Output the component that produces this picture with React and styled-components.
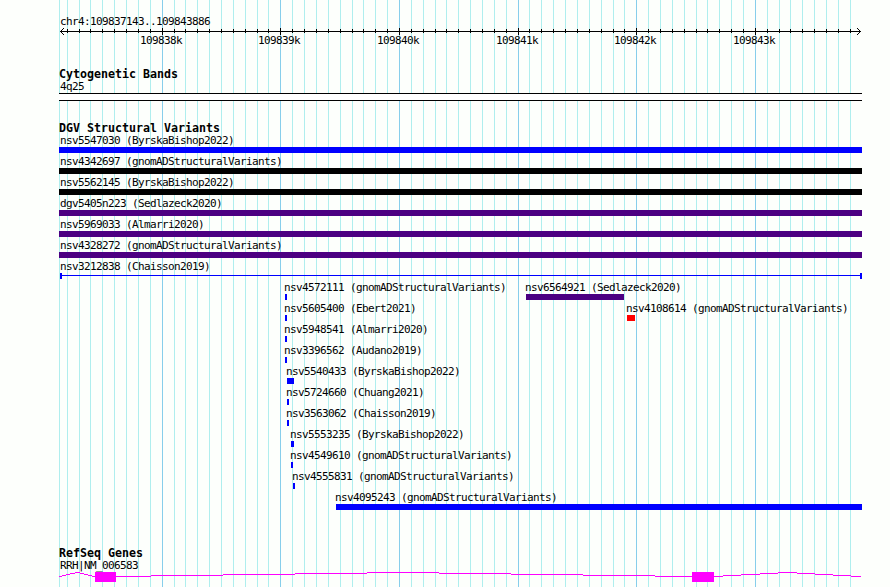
import React from "react";
import styled, { createGlobalStyle } from "styled-components";

const PAD = 59;
const SCALE = 800 / 6743;
const START = 109837143;

const toX = (pos) => Math.round(60 + (pos - START) * SCALE);

const gridLines = Array.from({ length: 67 }, (_, i) => {
  const pos = 109837200 + i * 100;
  return { pos, x: toX(pos), major: pos % 1000 === 0 };
});

const GlobalStyle = createGlobalStyle`
  html, body { margin: 0; overflow: hidden; background: #fdfffc; }
`;

const Browser = styled.main`
  position: relative;
  width: 890px;
  height: 587px;
  overflow: hidden;
  box-sizing: border-box;
  color: #000;
  background: #fdfffc;
`;

const Backdrop = styled.svg`
  position: absolute;
  inset: 0;
  shape-rendering: crispEdges;
`;

const Tracks = styled.div`
  position: relative;
  width: 803px;
  height: 100%;
  margin-left: ${PAD}px;
  display: flex;
  flex-direction: column;
`;

const Label = styled.span`
  display: block;
  height: 13px;
  margin-left: ${({ $inset = 1 }) => $inset}px;
  font: 11px/13px "DejaVu Sans Mono", monospace;
  letter-spacing: -0.622px;
  white-space: pre;
`;

const Title = styled.h2`
  margin: 0;
  height: 13px;
  padding-top: 1px;
  box-sizing: border-box;
  font: bold 11.63px/13px "DejaVu Sans Mono", monospace;
  letter-spacing: 0;
  white-space: pre;
`;

const RulerTrack = styled.header`
  height: 67px;
  padding-top: 15px;
  box-sizing: border-box;
`;

const Axis = styled.svg`
  display: block;
  width: 803px;
  height: 7px;
  overflow: visible;
  shape-rendering: crispEdges;
`;

const AxisLabels = styled.div`
  display: grid;
  grid-template-columns: ${({ $columns }) => $columns};
  padding-left: 81px;
  margin-top: -1px;
`;

const BandTrack = styled.section`
  height: 54px;
`;

const Band = styled.div`
  height: 6px;
  border: solid #000;
  border-width: 1px 0;
  background: #fff;
`;

const VariantTrack = styled.section`
  height: 425px;
`;

const Row = styled.div`
  display: flex;
  height: 21px;
`;

const Feature = styled.div`
  flex: none;
  width: ${({ $width }) => $width}px;
  margin-left: ${({ $gap }) => $gap}px;
  overflow: visible;
`;

const Bar = styled.div`
  width: ${({ $width }) => $width}px;
  height: 6px;
  background: ${({ $color }) => $color};
`;

const Span = styled.div`
  height: 6px;
  margin-left: 1px;
  box-sizing: border-box;
  border: solid #00f;
  border-width: 0 2px;
  display: flex;
  align-items: center;
  &::before {
    content: "";
    flex: 1;
    height: 1px;
    margin-bottom: 1px;
    background: #00f;
  }
`;

const GeneTrack = styled.section`
  height: 40px;
`;

const GeneModel = styled.svg`
  display: block;
  width: 803px;
  height: 10px;
  overflow: visible;
  shape-rendering: crispEdges;
`;

const BLUE = "#0000ff";
const INDIGO = "#4b0082";

const rows = [
  [{ name: "nsv5547030 (ByrskaBishop2022)", x: 59, w: 803, color: BLUE }],
  [{ name: "nsv4342697 (gnomADStructuralVariants)", x: 59, w: 803, color: "#000" }],
  [{ name: "nsv5562145 (ByrskaBishop2022)", x: 59, w: 803, color: "#000" }],
  [{ name: "dgv5405n223 (Sedlazeck2020)", x: 59, w: 803, color: INDIGO }],
  [{ name: "nsv5969033 (Almarri2020)", x: 59, w: 803, color: INDIGO }],
  [{ name: "nsv4328272 (gnomADStructuralVariants)", x: 59, w: 803, color: INDIGO }],
  [{ name: "nsv3212838 (Chaisson2019)", x: 59, w: 803, span: true }],
  [
    { name: "nsv4572111 (gnomADStructuralVariants)", x: 285, w: 2, color: BLUE },
    { name: "nsv6564921 (Sedlazeck2020)", x: 526, w: 98, color: INDIGO },
  ],
  [
    { name: "nsv5605400 (Ebert2021)", x: 285, w: 2, color: BLUE },
    { name: "nsv4108614 (gnomADStructuralVariants)", x: 627, w: 8, color: "#f00" },
  ],
  [{ name: "nsv5948541 (Almarri2020)", x: 285, w: 2, color: BLUE }],
  [{ name: "nsv3396562 (Audano2019)", x: 285, w: 2, color: BLUE }],
  [{ name: "nsv5540433 (ByrskaBishop2022)", x: 287, w: 7, color: BLUE }],
  [{ name: "nsv5724660 (Chuang2021)", x: 287, w: 2, color: BLUE }],
  [{ name: "nsv3563062 (Chaisson2019)", x: 287, w: 2, color: BLUE }],
  [{ name: "nsv5553235 (ByrskaBishop2022)", x: 291, w: 3, color: BLUE }],
  [{ name: "nsv4549610 (gnomADStructuralVariants)", x: 291, w: 2, color: BLUE }],
  [{ name: "nsv4555831 (gnomADStructuralVariants)", x: 293, w: 2, color: BLUE }],
  [{ name: "nsv4095243 (gnomADStructuralVariants)", x: 336, w: 526, color: BLUE }],
];

// [start, end, depth below the intron peak]
const introns = [
  [59, 62, 4], [62, 66, 3], [66, 70, 2], [70, 75, 1], [75, 80, 0],
  [80, 84, 1], [84, 88, 2], [88, 92, 3], [92, 95, 4],
  [116, 151, 4], [151, 223, 3], [223, 295, 2], [295, 367, 1], [367, 439, 0],
  [439, 511, 1], [511, 583, 2], [583, 655, 3], [655, 692, 4],
  [714, 723, 4], [723, 741, 3], [741, 760, 2], [760, 778, 1], [778, 797, 0],
  [797, 815, 1], [815, 833, 2], [833, 851, 3], [851, 861, 4],
];

const majors = gridLines.filter((g) => g.major);
const columns = majors
  .map((g, i) => (i < majors.length - 1 ? `${majors[i + 1].x - g.x}px` : "48px"))
  .join(" ");

function Grid() {
  return (
    <Backdrop width="890" height="587">
      <rect x="59" y="0" width="1" height="587" fill="#afeeee" />
      {gridLines.map((g) => (
        <rect key={g.pos} x={g.x} y="0" width="1" height="587" fill={g.major ? "#87ceeb" : "#afeeee"} />
      ))}
    </Backdrop>
  );
}

function Ruler() {
  return (
    <RulerTrack>
      <Label>chr4:109837143..109843886</Label>
      <Axis viewBox="59 28 803 7">
        <rect x="60" y="31" width="801" height="1" />
        {gridLines.map((g) => (
          <rect key={g.pos} x={g.x} y={g.major ? 28 : 29} width="1" height={g.major ? 7 : 4} />
        ))}
        {[1, 2, 3].map((d) => (
          <g key={d}>
            <rect x={60 + d} y={31 - d} width="1" height="1" />
            <rect x={60 + d} y={31 + d} width="1" height="1" />
            <rect x={860 - d} y={31 - d} width="1" height="1" />
            <rect x={860 - d} y={31 + d} width="1" height="1" />
          </g>
        ))}
      </Axis>
      <AxisLabels $columns={columns}>
        {majors.map((g) => (
          <Label key={g.pos} $inset={0}>{`${g.pos / 1000}k`}</Label>
        ))}
      </AxisLabels>
    </RulerTrack>
  );
}

function VariantRow({ features }) {
  let edge = PAD;
  return (
    <Row>
      {features.map((f) => {
        const gap = f.x - edge;
        edge = f.x + f.w;
        return (
          <Feature key={f.name} $width={f.w} $gap={gap}>
            <Label $inset={f.x === PAD ? 1 : -1}>{f.name}</Label>
            {f.span ? <Span /> : <Bar $width={f.w} $color={f.color} />}
          </Feature>
        );
      })}
    </Row>
  );
}

export default function App() {
  return (
    <>
      <GlobalStyle />
      <Browser>
        <Grid />
        <Tracks>
          <Ruler />
          <BandTrack>
            <Title>Cytogenetic Bands</Title>
            <Label>4q25</Label>
            <Band />
          </BandTrack>
          <VariantTrack>
            <Title>DGV Structural Variants</Title>
            {rows.map((features) => (
              <VariantRow key={features[0].name} features={features} />
            ))}
          </VariantTrack>
          <GeneTrack>
            <Title>RefSeq Genes</Title>
            <Label>RRH|NM_006583</Label>
            <GeneModel viewBox="59 572 803 10" fill="#ff00ff">
              {introns.map(([a, b, d]) => (
                <rect key={a} x={a} y={572 + d} width={b - a} height="1" />
              ))}
              <rect x="95" y="572" width="21" height="10" />
              <rect x="692" y="572" width="22" height="10" />
            </GeneModel>
          </GeneTrack>
        </Tracks>
      </Browser>
    </>
  );
}
